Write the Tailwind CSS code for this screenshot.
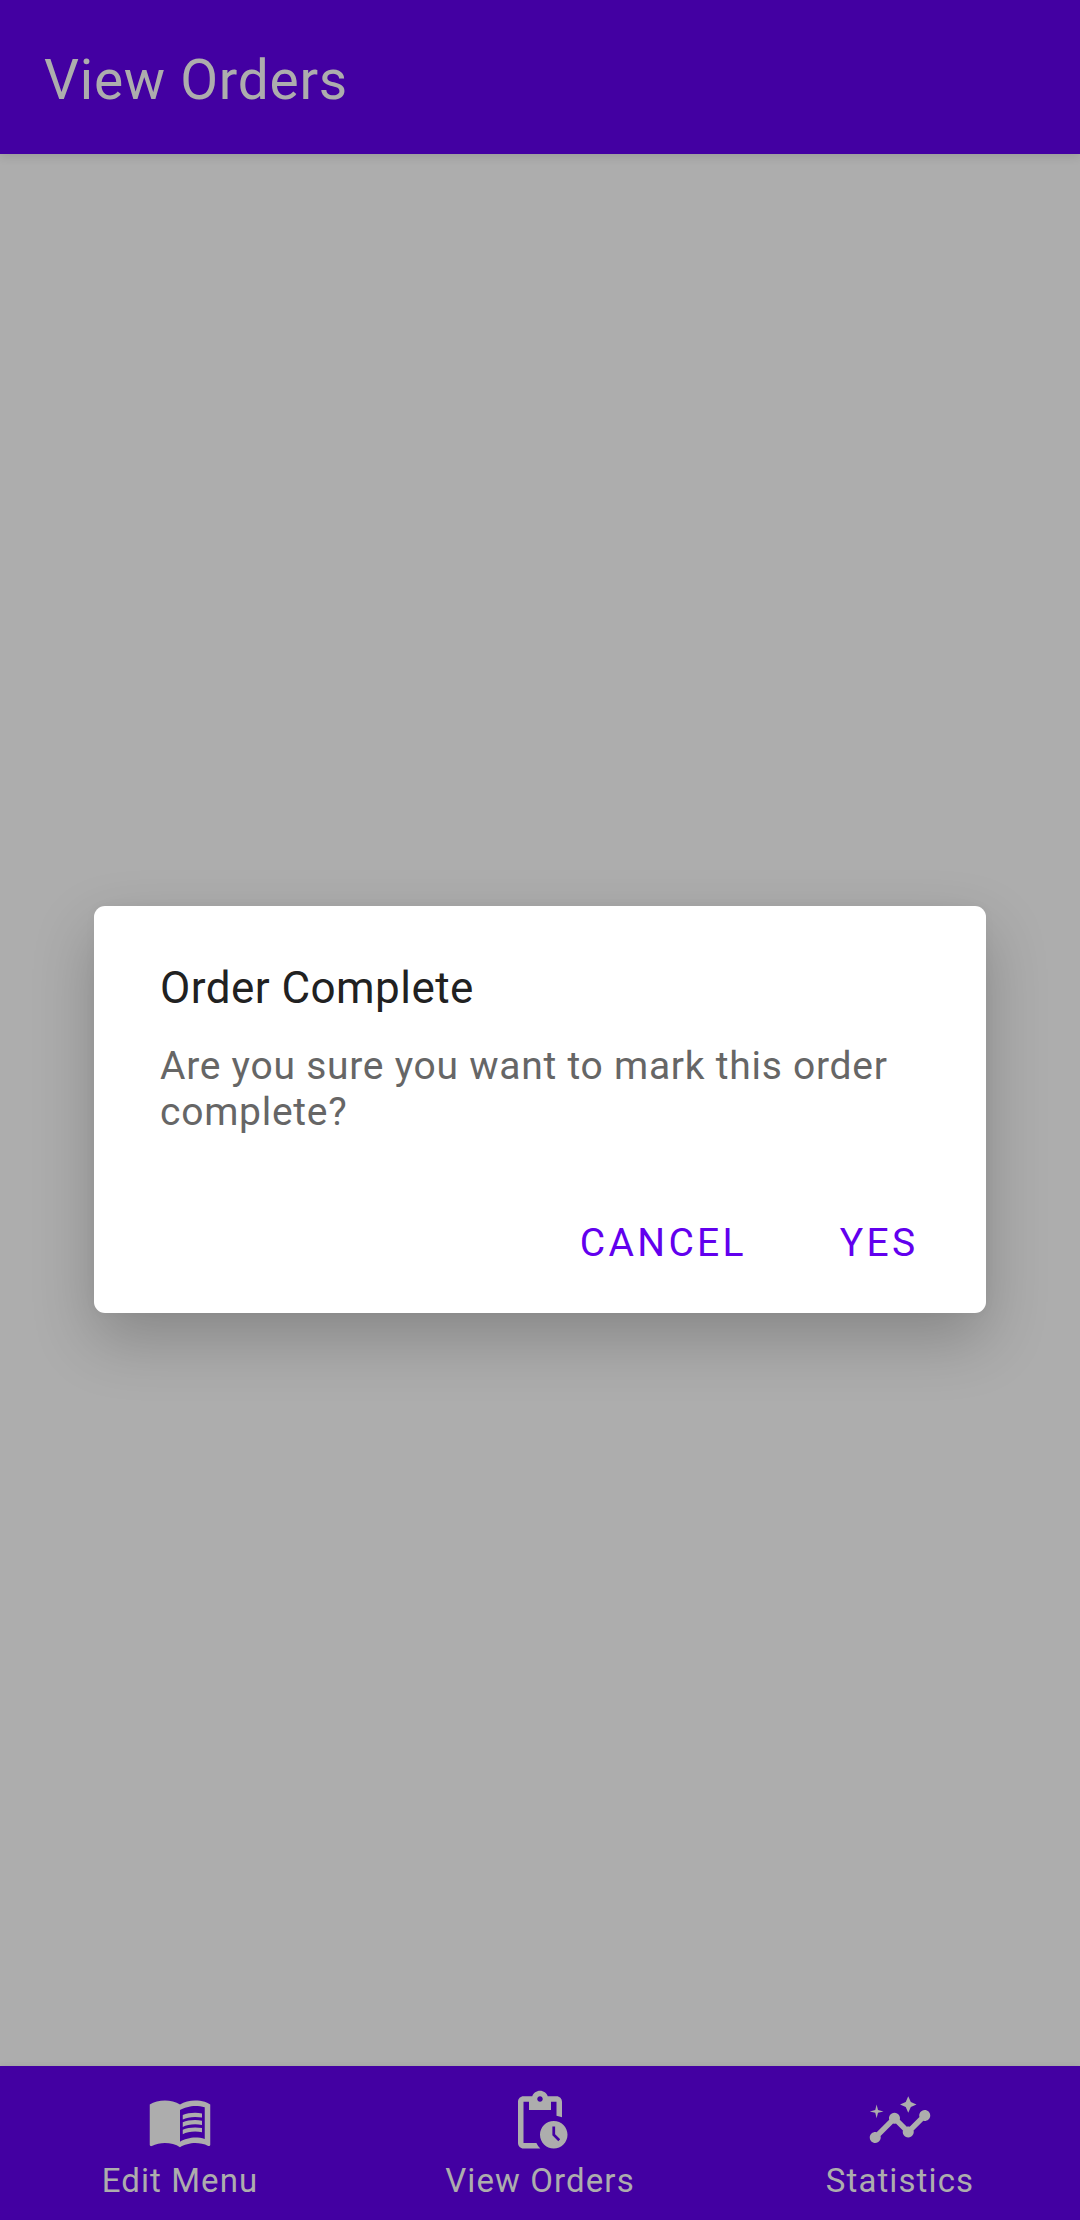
<!DOCTYPE html>
<html lang="en">
<head>
<meta charset="utf-8">
<title>View Orders</title>
<script src="https://cdn.jsdelivr.net/npm/@tailwindcss/browser@4"></script>
</head>
<body class="relative flex h-[2220px] w-[1080px] flex-col overflow-hidden bg-[#adadad] font-[Roboto,sans-serif]">
  <header class="z-10 flex h-[154px] shrink-0 items-center bg-[#4300a2] px-11 pt-1.5 text-[#adadad] shadow-[0_3px_9px_rgba(0,0,0,0.1)]">
    <h1 class="text-[55px] leading-[64px] tracking-[0.75px]">View Orders</h1>
  </header>

  <main class="flex flex-1 justify-center pt-[752px]">
    <section role="dialog" class="flex h-[407px] w-[892px] flex-col rounded-[11px] bg-white px-[66px] pt-[56px] shadow-[0_26px_62px_rgba(0,0,0,0.22),0_0_12px_rgba(0,0,0,0.03)]">
      <h2 class="text-[44px] leading-[52px] tracking-[0.45px] text-[#212121]">Order Complete</h2>
      <p class="mt-[29px] -mr-4 text-[39px] leading-[46px] tracking-[0.74px] text-[#666666]">Are you sure you want to mark this order<br>complete?</p>
      <div class="mt-[85px] mr-[1.5px] flex justify-end gap-[93px] text-[39px] leading-[46px] tracking-[3.3px] text-[#6200ee]">
        <button>CANCEL</button>
        <button>YES</button>
      </div>
    </section>
  </main>

  <nav class="grid h-[154px] shrink-0 grid-cols-3 bg-[#4300a2] pt-[22px] text-[33px] leading-[39px] tracking-[1.1px] text-[#adadad] shadow-[0_-1px_6px_rgba(0,0,0,0.06)]">
    <a class="flex flex-col items-center gap-[7px]">
      <svg class="size-[66px]" viewBox="0 0 24 24" fill="currentColor">
        <path d="M21 5c-1.11-.35-2.33-.5-3.5-.5-1.95 0-4.05.4-5.5 1.5-1.45-1.1-3.55-1.5-5.5-1.5S2.45 4.9 1 6v14.65c0 .25.25.5.5.5.1 0 .15-.05.25-.05C3.1 20.45 5.05 20 6.5 20c1.95 0 4.05.4 5.5 1.5 1.35-.85 3.8-1.5 5.5-1.5 1.65 0 3.35.3 4.75 1.05.1.05.15.05.25.05.25 0 .5-.25.5-.5V6c-.6-.45-1.25-.75-2-1zm0 13.5c-1.1-.35-2.3-.5-3.5-.5-1.7 0-4.15.65-5.5 1.5V8c1.35-.85 3.8-1.5 5.5-1.5 1.2 0 2.4.15 3.5.5v11.5z"/>
        <path d="M17.5 10.5c.88 0 1.73.09 2.5.26V9.24c-.79-.15-1.64-.24-2.5-.24-1.7 0-3.24.29-4.5.83v1.66c1.13-.64 2.7-.99 4.5-.99zM13 12.49v1.66c1.13-.64 2.7-.99 4.5-.99.88 0 1.73.09 2.5.26V11.9c-.79-.15-1.64-.24-2.5-.24-1.7 0-3.24.3-4.5.83zM17.5 14.33c-1.7 0-3.24.29-4.5.83v1.66c1.13-.64 2.7-.99 4.5-.99.88 0 1.73.09 2.5.26v-1.52c-.79-.16-1.64-.24-2.5-.24z"/>
      </svg>
      <span>Edit Menu</span>
    </a>
    <a class="flex flex-col items-center gap-[7px]">
      <svg class="size-[66px]" viewBox="0 0 24 24" fill="currentColor">
        <path d="M17 12c-2.76 0-5 2.24-5 5s2.24 5 5 5 5-2.24 5-5-2.24-5-5-5zm1.65 7.35L16.5 17.2V14h1v2.79l1.85 1.85-.7.71zM18 3h-3.18C14.4 1.84 13.3 1 12 1s-2.4.84-2.82 2H6c-1.1 0-2 .9-2 2v15c0 1.1.9 2 2 2h6.11c-.59-.57-1.07-1.25-1.42-2H6V5h2v3h8V5h2v5.08c.71.1 1.38.31 2 .6V5c0-1.1-.9-2-2-2zm-6 2c-.55 0-1-.45-1-1s.45-1 1-1 1 .45 1 1-.45 1-1 1z"/>
      </svg>
      <span>View Orders</span>
    </a>
    <a class="flex flex-col items-center gap-[7px]">
      <svg class="size-[66px]" viewBox="0 0 24 24" fill="currentColor">
        <path d="M21 8c-1.45 0-2.26 1.44-1.93 2.51l-3.55 3.56c-.3-.09-.74-.09-1.04 0l-2.55-2.55C12.27 10.45 11.46 9 10 9c-1.45 0-2.27 1.44-1.93 2.52l-4.56 4.55C2.44 15.74 1 16.55 1 18c0 1.1.9 2 2 2 1.45 0 2.26-1.44 1.93-2.51l4.55-4.56c.3.09.74.09 1.04 0l2.55 2.55C12.73 16.55 13.54 18 15 18c1.45 0 2.27-1.44 1.93-2.52l3.56-3.55C21.56 12.26 23 11.45 23 10c0-1.1-.9-2-2-2z"/>
        <path d="M15 9l.94-2.07L18 6l-2.06-.93L15 3l-.92 2.07L12 6l2.08.93zM3.5 11L4 9l2-.5L4 8l-.5-2L3 8l-2 .5L3 9z"/>
      </svg>
      <span>Statistics</span>
    </a>
  </nav>
</body>
</html>
